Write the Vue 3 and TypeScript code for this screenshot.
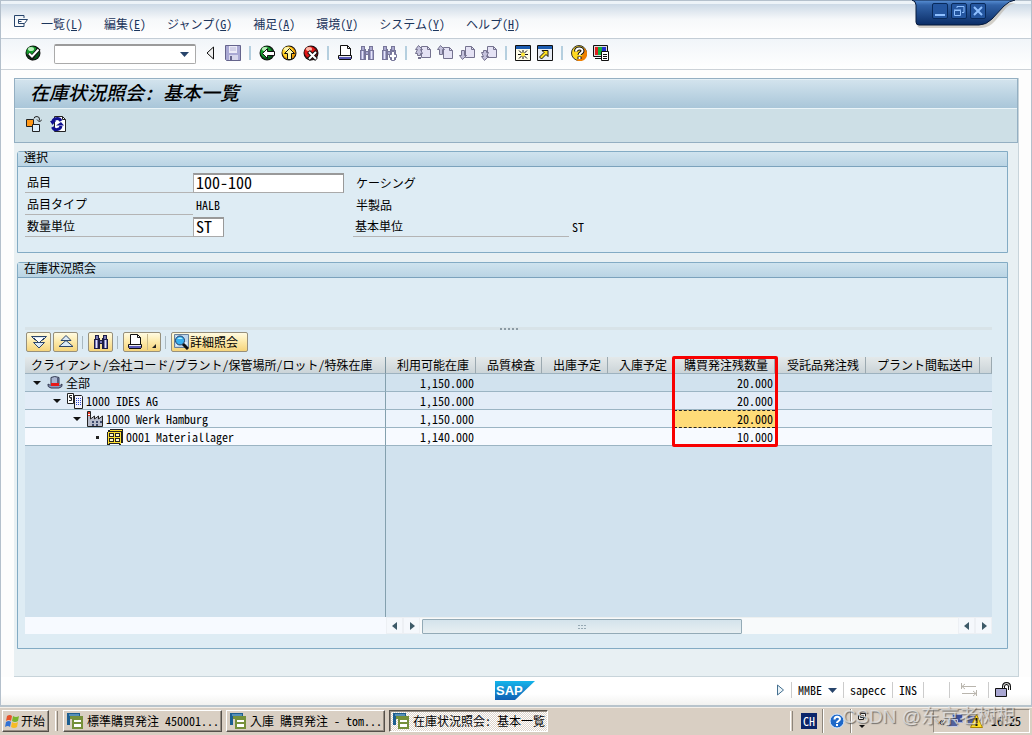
<script setup lang="ts">
import { ref } from 'vue'

interface MenuEntry { label: string; key: string }
interface Tool { icon: string; name: string }
interface StockRow { level: number; icon: string; label: string; leaf: boolean; available: string; onOrder: string }
interface Task { label: string; active: boolean }

const menus: MenuEntry[] = [
  { label: '一覧', key: 'L' },
  { label: '編集', key: 'E' },
  { label: 'ジャンプ', key: 'G' },
  { label: '補足', key: 'A' },
  { label: '環境', key: 'V' },
  { label: 'システム', key: 'Y' },
  { label: 'ヘルプ', key: 'H' },
]

const toolGroups: Tool[][] = [
  [{ icon: 'collapse', name: '折りたたみ' }, { icon: 'save', name: '保存' }],
  [{ icon: 'back', name: '戻る' }, { icon: 'up', name: '終了' }, { icon: 'cancel', name: '中止' }],
  [{ icon: 'print', name: '印刷' }, { icon: 'find', name: '検索' }, { icon: 'findNext', name: '次を検索' }],
  [{ icon: 'pageFirst', name: '先頭ページ' }, { icon: 'pagePrev', name: '前ページ' }, { icon: 'pageNext', name: '次ページ' }, { icon: 'pageLast', name: '最終ページ' }],
  [{ icon: 'session', name: '新規セッション' }, { icon: 'shortcut', name: 'ショートカット' }],
  [{ icon: 'help', name: 'ヘルプ' }, { icon: 'layout', name: 'レイアウト' }],
]

const columns: string[] = ['利用可能在庫', '品質検査', '出庫予定', '入庫予定', '購買発注残数量', '受託品発注残', 'プラント間転送中']

const rows: StockRow[] = [
  { level: 0, icon: 'hat', label: '全部', leaf: false, available: '1,150.000', onOrder: '20.000' },
  { level: 1, icon: 'company', label: '1000 IDES AG', leaf: false, available: '1,150.000', onOrder: '20.000' },
  { level: 2, icon: 'plant', label: '1000 Werk Hamburg', leaf: false, available: '1,150.000', onOrder: '20.000' },
  { level: 3, icon: 'storage', label: '0001 Materiallager', leaf: true, available: '1,140.000', onOrder: '10.000' },
]

const tasks: Task[] = [
  { label: '標準購買発注 450001...', active: false },
  { label: '入庫 購買発注 - tom...', active: false },
  { label: '在庫状況照会: 基本一覧', active: true },
]

const command = ref('')
const material = ref('100-100')
const unit = ref('ST')

const binoculars = (body: string, edge: string) =>
  `<path d="M2 1h4v3h1v2h2V4h1V1h4v4h1v10H9v-5H7v5H1V5h1z" fill="${edge}"/><path d="M3 2h2v3H3zM11 2h2v3h-2zM2 6h3v8H2zM11 6h3v8h-3zM7 7h2v2H7z" fill="${body}"/><path d="M3 6h1v8H3zM12 6h1v8h-1z" fill="#e6e6fa"/>`

const page = (x: number, y: number) =>
  `<path transform="translate(${x} ${y})" d="M.5.5h6l3 3v8h-9z" fill="#e4e2f4" stroke="#74728f"/><path transform="translate(${x} ${y})" d="M6.500.5v3h3" fill="none" stroke="#74728f"/>`

const ball = (light: string, mid: string, dark: string) =>
  `<circle cx="8" cy="8" r="7.500" fill="#111"/><circle cx="8" cy="8" r="6.500" fill="${dark}"/><circle cx="7" cy="7" r="5.500" fill="${mid}"/><ellipse cx="6" cy="4" rx="3" ry="2" fill="${light}"/>`

const icons: Record<string, string> = {
  menu: '<path d="M11 5V2.500H1.500v11H11V11" fill="none" stroke="#27446b"/><path d="M5.500 6.500h9l-3 4h-6zM5.500 8.500h3" fill="#fff" stroke="#27446b"/>',
  check: ball('#b8f0b8', '#149a2c', '#07551a') + '<path d="M3.500 8.500l3.500 4L14 3.500" fill="none" stroke="#111" stroke-width="4"/><path d="M4 8.500l3 3L13.500 4.500" fill="none" stroke="#fff" stroke-width="2"/>',
  collapse: '<path d="M10.500 2v12L4 8z" fill="#f0f0f0" stroke="#111"/>',
  save: '<path d="M.5.5h15v15h-14l-1-1z" fill="#aaa9d4" stroke="#65648c"/><path d="M4 1h8v7H4z" fill="#ecebf7"/><path d="M5 3h6M5 5h6" stroke="#b9b8d8"/><path d="M4 10h9v5H4z" fill="#d7d6ec"/><path d="M5 11h2v4H5z" fill="#65648c"/>',
  back: ball('#b8f0b8', '#149a2c', '#07551a') + '<path d="M3.500 8.500l5-5v3h7v4h-7v3z" fill="#fff" stroke="#111"/>',
  up: ball('#fff6b0', '#ffd42c', '#ee9a00') + '<path d="M8.500 3.500l5 5h-3v6h-4v-6h-3z" fill="#fff6a8" stroke="#111"/>',
  cancel: ball('#ffb8a8', '#e01818', '#8a0808') + '<path d="M5.500 6.500l8 8M13.500 6.500l-8 8" stroke="#111" stroke-width="4"/><path d="M6 7l7 7M13 7l-7 7" stroke="#fff" stroke-width="2"/>',
  print: '<path d="M3.500 10V.5h7l3 3V10" fill="#fff" stroke="#111"/><path d="M10.500.5v3h3" fill="none" stroke="#111"/><path d="M1.500 10.500h13v3h-13z" fill="#eee" stroke="#111"/><path d="M2 12h12v2H2z" fill="#5a5ab8"/><path d="M2 14h12v1H2z" fill="#111"/>',
  find: binoculars('#aaa9d0', '#77769a'),
  findDark: binoculars('#7c7cb8', '#1c1c44'),
  findNext: binoculars('#aaa9d0', '#77769a') + '<path d="M10.500 6.500h3v3h2v3h-2v3h-3v-3h-2v-3h2z" fill="#fff" stroke="#77769a"/>',
  pageFirst: page(6, 1) + '<path d="M3.500.5l-3 4h2l-2 4h2v2h3v-2h2l-2-4h2z" fill="#c4c2dc" stroke="#74728f"/><path d="M3 12h3v2H3z" fill="#74728f"/>',
  pagePrev: page(6, 2) + '<path d="M3.500.5l-3 4h2v5h3v-5h2z" fill="#c4c2dc" stroke="#74728f"/>',
  pageNext: page(6, 1) + '<path d="M3.500 14.500l-3-4h2v-5h3v5h2z" fill="#c4c2dc" stroke="#74728f"/>',
  pageLast: page(6, 1) + '<path d="M3.500 15.500l-3-4h2l-2-4h2v-2h3v2h2l-2 4h2z" fill="#c4c2dc" stroke="#74728f"/>',
  session: '<path d="M.5.5h15v15H.5z" fill="#fffde8" stroke="#111"/><path d="M1 1h14v3H1z" fill="#1c5cb0"/><path d="M8 5v3M8 11v3M3 9.500h3M10 9.500h3M4 5.500l3 3M12 5.500l-3 3M4 13.500l3-3M12 13.500l-3-3" stroke="#111"/><circle cx="8" cy="9.500" r="2" fill="#ffe838"/>',
  shortcut: '<path d="M.5.5h15v15H.5z" fill="#e8ecf4" stroke="#111"/><path d="M1 1h14v3H1z" fill="#1c5cb0"/><path d="M5 5.500h6v6l-2-2L4.500 14 2.500 12 7 7.500z" fill="#ffe020" stroke="#111"/>',
  help: '<circle cx="8" cy="8" r="7.500" fill="#ffd820" stroke="#333"/><path d="M13 3a7 7 0 0 1-8 12q8-2 8-12" fill="#f08000"/><path d="M5 6.500C5 2.500 11.500 2.500 11.500 6c0 2-3 2-3 4M8.500 11.500v2.500" fill="none" stroke="#111" stroke-width="4"/><path d="M5 6.500C5 2.500 11.500 2.500 11.500 6c0 2-3 2-3 4M8.500 12v2" fill="none" stroke="#fff" stroke-width="2"/>',
  layout: '<path d="M.5.5h14v11H.5z" fill="#ddd" stroke="#111"/><path d="M2 2h4v8H2z" fill="#e02020"/><path d="M5 2h4v8H5z" fill="#10b040"/><path d="M9 2h4v8H9z" fill="#2030d0"/><path d="M2 13h6v1H2z" fill="#111"/><path d="M8.500 6.500h7v9h-7z" fill="#fff" stroke="#111"/><path d="M10 9.500h4M10 11.500h4M10 13.500h4" stroke="#111"/>',
  swap: '<path d="M.5 3.500h7v7h-7z" fill="#ff9818" stroke="#222"/><path d="M6.500 8.500h7v7h-7z" fill="#dff0fc" stroke="#222"/><path d="M8 2.500q0-2 3-2t2.500 4M11 3.500l2.500 2.500L16 3.500" fill="none" stroke="#222"/>',
  refresh: '<path d="M4.500.5h8l3 3v12h-11z" fill="#fff" stroke="#222"/><path d="M12.500.5v3h3" fill="none" stroke="#222"/><path d="M11 5A4.500 4.500 0 0 0 2.500 7M2.500 11A4.500 4.500 0 0 0 11 10" fill="none" stroke="#101090" stroke-width="3"/><path d="M0 5h6L2.500 9zM6 9.500h8L11 6z" fill="#101090"/>',
  expandAll: '<path d="M.5 2.500h15L12 6H4zM2.500 8.500h11L8 14z" fill="#dceaf6" stroke="#2c4468"/><path d="M3 4l5 5 5-5" fill="#fff" stroke="#2c4468"/>',
  collapseAll: '<path d="M8 1.500L3 6.500h10zM8 6.500L1 12.500h14z" fill="#dceaf6" stroke="#2c4468"/><path d="M4 6.500h8" stroke="#2c4468"/>',
  detail: '<path d="M1.500.5h14v13h-14z" fill="#bcd6ee" stroke="#67809a"/><path d="M3 3h5M3 8h3M11 9h3M3 11h5" stroke="#fff"/><circle cx="7" cy="6.500" r="4.500" fill="#38b0f0" stroke="#223a60"/><path d="M4 5q3-3 6 0z" fill="#b0f0ff"/><path d="M10 10l5 5" stroke="#111" stroke-width="3"/>',
  hat: '<path d="M4 2.500q3.500-2 8 0V9H4z" fill="#a8b4d0" stroke="#333a50"/><path d="M10 3h2v6h-2z" fill="#565e80"/><path d="M1 9q-1 3 3 4h8q4-1 3-4-2 2-3 1H4q-2 0-3-1" fill="#8e9ac0" stroke="#333a50"/><path d="M4 8h8v3H4z" fill="#e81818"/>',
  company: '<path d="M.5.5h6v10h-6z" fill="#fff" stroke="#222"/><path d="M5 2.500H2.500v2h2v3H2M3 5h2" fill="none" stroke="#222"/><path d="M7.500 2.500h7l1 1v12h-8z" fill="#f3f5ff" stroke="#222"/><path d="M9 5h1v1H9zM11 5h1v1h-1zM13 5h1v1h-1zM9 7h1v1H9zM11 7h1v1h-1zM13 7h1v1h-1zM9 9h1v1H9zM11 9h1v1h-1zM13 9h1v1h-1zM9 11h1v1H9zM11 11h1v1h-1zM13 11h1v1h-1z" fill="#3048c8"/>',
  plant: '<path d="M.5 15.500v-15h3V8l4-3v3l4-3v3l4-3v10.500z" fill="#b7bccb" stroke="#222"/><path d="M1 1h2v4H1z" fill="#e43a28"/><path d="M1 3h2v1H1z" fill="#fff"/><path d="M5 10h2v2H5zM9 10h2v2H9zM13 10h2v2h-2zM5 13h2v2H5zM9 13h2v2H9z" fill="#3c4a6c"/>',
  storage: '<path d="M3 0h13v14h-2v2h-2v-1H3v1H0V3h1V1h2z" fill="#222"/><path d="M3 1h12v1H3zM1 3h13v1H1zM1 8h13v1H1zM1 13h13v1H1zM1 3h1v12H1zM7 3h1v11H7zM13 3h1v12h-1z" fill="#ffe030"/><path d="M3 5h3v2H3zM9 5h3v2H9zM3 10h3v2H3zM9 10h3v2H9z" fill="#fff8c8"/>',
  windows: '<path d="M3 3q3-2 5 0L7 8q-2-2-5 0z" fill="#e6522a"/><path d="M9 3q3 2 6 0l-1 5q-3 2-6 0z" fill="#78b52c"/><path d="M2 9q3-2 5 0l-1 5q-2-2-5 0z" fill="#3272d4"/><path d="M8 9q3 2 6 0l-1 5q-3 2-6 0z" fill="#f6bc24"/>',
  task: '<path d="M0 0h13v3H3v9H0z" fill="#1c5e90"/><path d="M3 3h13v13H5V6H3z" fill="#76903a"/><path d="M7 7h7v2H7zM7 11h7v3H7z" fill="#fff"/><path d="M2 2h10" stroke="#8ec0e0"/>',
  question: '<circle cx="8" cy="8" r="7" fill="#1e68c8" stroke="#dcebff"/><path d="M5.500 6.500C5.500 3 11 3 11 6c0 2-3 2-3 4M8 11v2" fill="none" stroke="#fff" stroke-width="2"/>',
  lock: '<path d="M8.500 7V4.500q0-3 3-3t3 3V8" fill="none" stroke="#111" stroke-width="3"/><path d="M8.500 7V4.500q0-3 3-3t3 3V8" fill="none" stroke="#fff"/><path d="M.5 6.500h11v8H.5z" fill="#a9a7d2" stroke="#111"/>',
  transfer: '<path d="M.5 1v6M1 4.500h14M4 2L1 4.500 4 7M15.500 8v6M1 11.500h14M12 9l3 2.500-3 2.500" fill="none" stroke="#b9b5ad"/>',
  network: '<path d="M4.500 1.500h10v8h-10z" fill="#3b4f9c" stroke="#a7b2d8"/><path d="M.5 6.500h9v7h-9z" fill="#54629e" stroke="#c3cae4"/>',
  warning: '<path d="M1 3h8v8H1z" fill="#54629e"/><path d="M9.500 1.500l6 13h-12z" fill="#ffe020" stroke="#ab8500"/><path d="M9.500 5v5M9.500 11v2" stroke="#111" stroke-width="2"/>',
}
</script>

<template>
  <div class="desktop">
    <main class="window">
      <nav class="menubar">
        <button class="plain" aria-label="メニュー"><svg class="ico" viewBox="0 0 16 16" v-html="icons.menu" /></button>
        <div class="menus">
          <button v-for="m in menus" :key="m.key" class="menu">{{ m.label }}(<u>{{ m.key }}</u>)</button>
        </div>
      </nav>

      <div class="controls">
        <svg class="tab" viewBox="0 0 104 32">
          <defs>
            <linearGradient id="tabfill" x1="0" y1="0" x2="0" y2="1">
              <stop offset="0" stop-color="#5c93d8" /><stop offset=".2" stop-color="#3263a8" /><stop offset="1" stop-color="#0b2d66" />
            </linearGradient>
          </defs>
          <path d="M1 2h4v22q0 4 4 4h60q8 0 14-7l11-13q4-4 10-5z" fill="#b9b3a6" opacity=".6" />
          <path d="M0 0q4 1 4 5v17q0 3 3 3h60q7 0 13-6L92 6q5-5 11-6z" fill="url(#tabfill)" stroke="#061a3c" />
        </svg>
        <div class="control-buttons">
          <button aria-label="最小化"><svg viewBox="0 0 14 14"><path d="M2 11h10" stroke="#8fc0ff" stroke-width="2" /></svg></button>
          <button aria-label="元に戻す"><svg viewBox="0 0 14 14"><path d="M5 4V2.500h7v6h-2M2.500 6.500h6v5h-6zM2 6h7" fill="none" stroke="#8fc0ff" /></svg></button>
          <button aria-label="閉じる"><svg viewBox="0 0 14 14"><path d="M3 3l8 8M11 3l-8 8" stroke="#8fc0ff" stroke-width="2" /></svg></button>
        </div>
      </div>

      <div class="toolbar">
        <button class="plain" aria-label="実行"><svg class="ico" viewBox="0 0 16 16" v-html="icons.check" /></button>
        <div class="command">
          <input v-model="command" aria-label="コマンド">
          <button class="plain" aria-label="履歴"><svg class="caret" viewBox="0 0 9 5"><path d="M0 0h9L4.500 5z" fill="#27446b" /></svg></button>
        </div>
        <template v-for="(g, i) in toolGroups" :key="i">
          <span v-if="i > 0" class="sep" />
          <button v-for="t in g" :key="t.icon" class="plain" :aria-label="t.name"><svg class="ico" viewBox="0 0 16 16" v-html="icons[t.icon]" /></button>
        </template>
      </div>

      <section class="screen">
        <header class="title-block">
          <h1>在庫状況照会: 基本一覧</h1>
          <div class="app-tools">
            <button class="plain" aria-label="切替"><svg class="ico" viewBox="0 0 16 16" v-html="icons.swap" /></button>
            <button class="plain" aria-label="更新"><svg class="ico" viewBox="0 0 16 16" v-html="icons.refresh" /></button>
          </div>
        </header>

        <div class="content">
          <section class="group">
            <h2>選択</h2>
            <div class="form">
              <label class="lbl" for="material">品目</label>
              <input id="material" v-model="material" class="field">
              <span class="txt">ケーシング</span><span />
              <span class="lbl">品目タイプ</span>
              <span class="val">HALB</span>
              <span class="txt">半製品</span><span />
              <label class="lbl" for="unit">数量単位</label>
              <input id="unit" v-model="unit" class="field short">
              <span class="lbl base">基本単位</span>
              <span class="val">ST</span>
            </div>
          </section>

          <section class="group stock">
            <h2>在庫状況照会</h2>
            <div class="stock-body">
              <div class="splitter"><i v-for="n in 5" :key="n" /></div>
              <div class="grid-tools">
                <button class="gold" aria-label="すべて展開"><svg class="ico" viewBox="0 0 16 16" v-html="icons.expandAll" /></button>
                <button class="gold" aria-label="すべて圧縮"><svg class="ico" viewBox="0 0 16 16" v-html="icons.collapseAll" /></button>
                <span class="gsep" />
                <button class="gold" aria-label="検索"><svg class="ico" viewBox="0 0 16 16" v-html="icons.findDark" /></button>
                <span class="gsep" />
                <button class="gold split" aria-label="印刷">
                  <svg class="ico" viewBox="0 0 16 16" v-html="icons.print" />
                  <svg class="corner" viewBox="0 0 10 16"><path d="M.5 0v16" stroke="#c9b98a" /><path d="M9 10v4H5z" fill="#222" /></svg>
                </button>
                <span class="gsep" />
                <button class="gold wide"><svg class="ico" viewBox="0 0 16 16" v-html="icons.detail" />詳細照会</button>
              </div>

              <div class="tree">
                <table>
                  <colgroup>
                    <col class="c-tree"><col class="c-avail"><col class="c-std"><col class="c-std"><col class="c-std">
                    <col class="c-order"><col class="c-cons"><col class="c-trans"><col>
                  </colgroup>
                  <thead>
                    <tr>
                      <th class="first">クライアント/会社コード/プラント/保管場所/ロット/特殊在庫</th>
                      <th v-for="(c, i) in columns" :key="c">{{ c }}<span v-if="i === 4" class="mark" /></th>
                      <th />
                    </tr>
                  </thead>
                  <tbody>
                    <tr v-for="r in rows" :key="r.level" :class="'level' + r.level">
                      <td class="node">
                        <div class="node-in">
                          <svg class="twisty" viewBox="0 0 8 8"><path v-if="!r.leaf" d="M0 2h8L4 6z" fill="#111" /><path v-else d="M3 3h3v3H3z" fill="#222" /></svg>
                          <svg class="ico" viewBox="0 0 16 16" v-html="icons[r.icon]" />
                          <span>{{ r.label }}</span>
                        </div>
                      </td>
                      <td class="num">{{ r.available }}</td>
                      <td /><td /><td />
                      <td class="num order" :class="{ selected: r.level === 2 }">{{ r.onOrder }}</td>
                      <td /><td /><td />
                    </tr>
                  </tbody>
                </table>
                <div class="void"><div class="void-tree" /></div>
                <div class="scroll">
                  <div class="scroll-blank" />
                  <button aria-label="左端"><svg viewBox="0 0 8 10"><path d="M6 1v8L1 5z" fill="#3d5a68" /></svg></button>
                  <button aria-label="右へ"><svg viewBox="0 0 8 10"><path d="M2 1v8l5-4z" fill="#3d5a68" /></svg></button>
                  <div class="track"><div class="thumb"><i v-for="n in 6" :key="n" /></div></div>
                  <button aria-label="左へ"><svg viewBox="0 0 8 10"><path d="M6 1v8L1 5z" fill="#3d5a68" /></svg></button>
                  <button aria-label="右端"><svg viewBox="0 0 8 10"><path d="M2 1v8l5-4z" fill="#3d5a68" /></svg></button>
                </div>
              </div>
            </div>
          </section>
        </div>
      </section>

      <footer class="status">
        <svg class="sap" viewBox="0 0 40 19">
          <defs><linearGradient id="sapfill" x1="0" y1="0" x2="0" y2="1"><stop offset="0" stop-color="#14b4ea" /><stop offset="1" stop-color="#1160b4" /></linearGradient></defs>
          <path d="M0 0h40L20 19H0z" fill="url(#sapfill)" />
          <text x="1" y="14" class="sap-text">SAP</text>
        </svg>
        <div class="status-items">
          <svg class="play" viewBox="0 0 9 12"><path d="M1.500 1v10l6-5z" fill="#eaf3f8" stroke="#457090" /></svg>
          <span class="cell">MMBE <svg class="caret" viewBox="0 0 9 5"><path d="M0 0h9L4.500 5z" fill="#27446b" /></svg></span>
          <span class="cell">sapecc</span>
          <span class="cell">INS</span>
          <span class="cell gap" />
          <span class="cell tr"><svg class="ico" viewBox="0 0 16 16" v-html="icons.transfer" /></span>
          <span class="cell lk"><svg class="ico" viewBox="0 0 16 16" v-html="icons.lock" /></span>
        </div>
      </footer>
    </main>

    <footer class="taskbar">
      <button class="start"><svg class="ico" viewBox="0 0 16 16" v-html="icons.windows" />开始</button>
      <span class="grip" />
      <button v-for="t in tasks" :key="t.label" class="task" :class="{ active: t.active }"><svg class="ico" viewBox="0 0 16 16" v-html="icons.task" /><span>{{ t.label }}</span></button>
      <div class="tray">
        <span class="grip" />
        <span class="lang">CH</span>
        <span class="line" />
        <svg class="ico" viewBox="0 0 16 16" v-html="icons.question" />
        <span class="line" />
        <svg class="mini" viewBox="0 0 10 18"><path d="M3.500 1.500h5v4h-5zM1.500 3.500h5v4h-5z" fill="#eee" stroke="#222" /><path d="M2 13h6l-3 3z" fill="#111" /></svg>
        <div class="notify">
          <span>«</span>
          <svg class="ico" viewBox="0 0 16 16" v-html="icons.network" />
          <svg class="ico" viewBox="0 0 16 16" v-html="icons.warning" />
          <time>16:25</time>
        </div>
      </div>
      <div class="watermark">CSDN @东京老树根</div>
    </footer>
  </div>
</template>

<style>
html, body { margin: 0; height: 100%; }
body { background: #d9cfc3; }
</style>

<style scoped>
.desktop {
  min-height: 100vh;
  display: flex;
  flex-direction: column;
  box-sizing: border-box;
  overflow: hidden;
  font-family: "Noto Sans CJK JP", "Noto Sans CJK SC", sans-serif;
  font-feature-settings: "hwid";
  font-size: 12px;
  line-height: 16px;
  color: #000;
}
.desktop *, .desktop *::before { box-sizing: border-box; }
button, input { font: inherit; font-feature-settings: inherit; color: inherit; }
button { padding: 0; cursor: pointer; }
.plain { border: 0; background: none; display: flex; }
.ico { width: 16px; height: 16px; display: block; flex: none; }
.caret { width: 9px; height: 5px; flex: none; }

.window {
  position: relative;
  flex: 1;
  display: flex;
  flex-direction: column;
  border: 1px solid #b4c0cc;
  border-bottom: 2px solid #b8c4cc;
  background: #fdfdfd;
}
.menubar {
  height: 38px;
  display: flex;
  align-items: center;
  gap: 12px;
  padding: 6px 12px 0;
  border-top: 3px solid #edf3f8;
  border-bottom: 1px solid #c4cdd6;
  background: linear-gradient(#ccd9e6, #f6f8fa 45%, #fff);
}
.menubar .ico { margin-top: -6px; }
.menus { display: flex; gap: 21px; }
.menu { border: 0; background: none; color: #1c355c; white-space: nowrap; }

.controls { position: absolute; top: -1px; right: 15px; width: 104px; height: 32px; }
.tab { width: 104px; height: 32px; display: block; }
.control-buttons { position: absolute; top: 3px; left: 20px; display: flex; gap: 3px; }
.control-buttons button { width: 16px; height: 16px; border: 1px solid #082a5c; border-radius: 2px; background: #2456a0; display: flex; }
.control-buttons svg { width: 14px; height: 14px; }

.toolbar {
  height: 31px;
  display: flex;
  align-items: center;
  gap: 6px;
  padding: 0 24px 2px;
  border-bottom: 1px solid #ccd2d8;
  background: linear-gradient(#f1f5f9, #fff);
}
.command {
  width: 142px;
  height: 20px;
  margin: 2px 1px 0 7px;
  display: flex;
  align-items: center;
  padding-right: 6px;
  border: 1px solid #aaa;
  border-top: 2px solid #9b9b9b;
  border-radius: 2px;
  background: #fff;
}
.command input { flex: 1; min-width: 0; border: 0; padding: 0 4px; background: none; outline: 0; }
.sep { width: 2px; height: 14px; margin: 0 2px; background: #b5cfdf; }

.screen {
  flex: 1;
  display: flex;
  flex-direction: column;
  margin: 8px 12px 0 13px;
  border: 1px solid #c8d4da;
  border-width: 0 1px 1px 0;
  background: #e8f0f3;
}
.title-block { border: 1px solid #94afc2; background: #cddfe6; }
h1 {
  margin: 0;
  height: 30px;
  padding: 0 15px;
  border-top: 1px solid #e3eff6;
  border-bottom: 1px solid #eaf4f8;
  background: linear-gradient(#d2e3ed, #a9c6d9);
  font-size: 19px;
  line-height: 23px;
  font-weight: 500;
  font-style: italic;
}
.app-tools { height: 33px; display: flex; gap: 8px; padding: 7px 11px; }
.content { flex: 1; display: flex; flex-direction: column; gap: 9px; padding: 8px 10px 27px 3px; }
.group { border: 1px solid #83abc4; border-radius: 3px 0 0; background: #deecf4; }
h2 {
  margin: 0;
  height: 15px;
  padding-left: 6px;
  border-bottom: 1px solid #7ba2bc;
  background: linear-gradient(#cfe3ee, #bad4e4);
  font-size: 12px;
  line-height: 10px;
  font-weight: 400;
}
.form {
  display: grid;
  grid-template-columns: 168px 160px 216px 1fr;
  grid-auto-rows: 22px;
  align-items: end;
  padding: 4px 7px 15px;
}
.lbl { height: 20px; padding-left: 2px; line-height: 18px; border-bottom: 1px solid #b4b4b4; }
.val { padding: 0 3px; line-height: 20px; }
.txt { padding-left: 3px; line-height: 20px; }
.field {
  width: 151px;
  height: 20px;
  padding: 0 2px 4px;
  border: 1px solid #aaa;
  border-top: 2px solid #999;
  border-right-color: #999;
  background: #fff;
  font-size: 16px;
  line-height: 16px;
}
.field.short { width: 31px; }

.stock { flex: 1; display: flex; flex-direction: column; }
.stock-body { flex: 1; display: flex; flex-direction: column; padding: 49px 15px 14px 7px; }
.splitter { height: 3px; display: flex; justify-content: center; align-items: center; gap: 2px; background: #d8e3e8; }
.splitter i { width: 2px; height: 2px; background: #8b9aa4; }
.grid-tools { display: flex; align-items: center; gap: 2px; height: 27px; padding: 0 1px 3px; }
.gold {
  width: 25px;
  height: 20px;
  display: flex;
  align-items: center;
  justify-content: center;
  border: 1px solid #97907c;
  border-radius: 2px;
  background: linear-gradient(#fffbe2, #fdebae 45%, #f5d47b);
}
.gold.split { width: 38px; gap: 4px; }
.gold.wide { width: 77px; justify-content: flex-start; gap: 1px; padding-left: 1px; white-space: nowrap; }
.corner { width: 10px; height: 16px; }
.gsep { width: 1px; height: 13px; margin: 0 3px 0 2px; background: #a9b8c0; }

.tree { flex: 1; display: flex; flex-direction: column; background: #d1e2ee; }
table { width: 100%; table-layout: fixed; border-collapse: separate; border-spacing: 0; }
.c-tree { width: 361px; }
.c-avail { width: 90px; }
.c-std { width: 66px; }
.c-order { width: 101px; }
.c-cons { width: 91px; }
.c-trans { width: 114px; }
th, td { padding: 0; white-space: nowrap; }
th {
  position: relative;
  height: 17px;
  padding-right: 6px;
  border-right: 1px solid #9ba9b0;
  border-bottom: 1px solid #9db2bf;
  background: linear-gradient(#e4e9ea, #cbd4d8);
  font-weight: 400;
  line-height: 16px;
  text-align: right;
}
th.first { text-align: left; padding: 0 0 0 6px; border-right-color: #7c949f; }
td { height: 18px; line-height: 17px; border-bottom: 1px solid #9bb4c3; }
.node { border-right: 1px solid #84a0ae; }
.node-in { display: flex; align-items: center; padding-left: 8px; }
.node-in .ico { margin: 0 3px 0 6px; }
.twisty { width: 8px; height: 8px; }
.level0 td { background: #d1e2ee; }
.level1 td { background: #e2ecf7; }
.level2 td { background: #edf4fc; }
.level3 td { background: #f7faff; }
.level1 .node-in { padding-left: 28px; }
.level2 .node-in { padding-left: 48px; }
.level3 .node-in { padding-left: 68px; }
.num { text-align: right; padding-right: 2px; }
.level2 td.selected { background: #ffdb78; border-top: 1px dashed #222; border-bottom: 1px dashed #222; line-height: 16px; }
.mark { position: absolute; top: -1px; left: -2px; right: -4px; height: 91px; border: 3px solid #f80000; border-radius: 2px; z-index: 1; pointer-events: none; }
.void { flex: 1; display: flex; }
.void-tree { width: 361px; border-right: 1px solid #84a0ae; }
.scroll { height: 17px; display: flex; background: #f8fafb; }
.scroll-blank { width: 361px; background: #f7faff; }
.scroll button { width: 17px; height: 17px; border: 1px solid #edf0f4; background: #f5f8fc; display: flex; align-items: center; justify-content: center; }
.scroll button svg { width: 8px; height: 10px; }
.track { flex: 1; padding: 1px 2px; border-top: 1px solid #edf0f0; }
.thumb {
  width: 60%;
  height: 15px;
  display: grid;
  grid-template-columns: repeat(3, 2px);
  grid-auto-rows: 1px;
  gap: 2px 1px;
  place-content: center;
  border: 1px solid #93aab6;
  border-radius: 1px;
  background: linear-gradient(#d4e3eb, #e7eff2);
}
.thumb i { background: #96a9b4; }

.status { position: relative; height: 28px; display: flex; align-items: center; justify-content: flex-end; padding: 0 20px 2px 0; background: linear-gradient(#fff 60%, #f2f2f0); }
.sap { position: absolute; left: 48%; top: 4px; width: 40px; height: 19px; }
.sap-text { font: 700 13px "Liberation Sans", Arial, sans-serif; fill: #fff; }
.status-items { display: flex; align-items: center; }
.play { width: 9px; height: 12px; margin-right: 6px; }
.cell { height: 16px; padding: 0 6px; border-left: 1px solid #ccc; display: flex; align-items: center; gap: 6px; }
.cell.gap { width: 26px; }
.cell.tr { width: 39px; padding-left: 11px; }
.cell.lk { padding-right: 0; }

.taskbar { position: relative; height: 28px; display: flex; align-items: center; gap: 4px; padding: 0 2px 2px; border-top: 1px solid #f4efe8; background: #d9cfc3; }
.start, .task {
  height: 22px;
  display: flex;
  align-items: center;
  border: 1px solid;
  border-color: #fff #55504a #55504a #fff;
  box-shadow: inset -1px -1px #968e84;
  background: #d9cfc3;
  white-space: nowrap;
}
.start { width: 47px; gap: 1px; padding-left: 1px; font-family: "Noto Sans CJK SC", sans-serif; }
.grip { width: 3px; height: 20px; margin: 0 1px 0 2px; border-left: 1px solid #fff; border-right: 1px solid #8d857b; }
.task { width: 159px; gap: 4px; padding-left: 3px; overflow: hidden; }
.task.active { border-color: #55504a #fff #fff #55504a; box-shadow: inset 1px 1px #968e84; background: repeating-conic-gradient(#fff 0 25%, #ddd4ca 0 50%) 0 0 / 2px 2px; }
.tray { margin-left: auto; display: flex; align-items: center; }
.tray > .grip { margin: 0 8px 0 0; }
.lang { width: 16px; height: 16px; background: #0a246a; color: #fff; text-align: center; }
.line { width: 2px; height: 24px; margin: 0 5px; border-left: 1px solid #8d857b; border-right: 1px solid #fff; }
.mini { width: 10px; height: 18px; }
.notify { height: 24px; display: flex; align-items: center; gap: 3px; width: 97px; margin-left: 66px; padding: 0 8px 0 5px; border: 1px solid; border-color: #968e84 #fff #fff #968e84; }
.notify time { margin-left: auto; }
.watermark {
  position: absolute;
  right: 16px;
  top: -5px;
  font: 19px/28px "Liberation Sans", "Noto Sans CJK SC", sans-serif;
  font-feature-settings: normal;
  color: rgba(235, 235, 235, .7);
  text-shadow: 1px 1px 1px rgba(70, 70, 70, .7);
  white-space: nowrap;
  pointer-events: none;
}
</style>
